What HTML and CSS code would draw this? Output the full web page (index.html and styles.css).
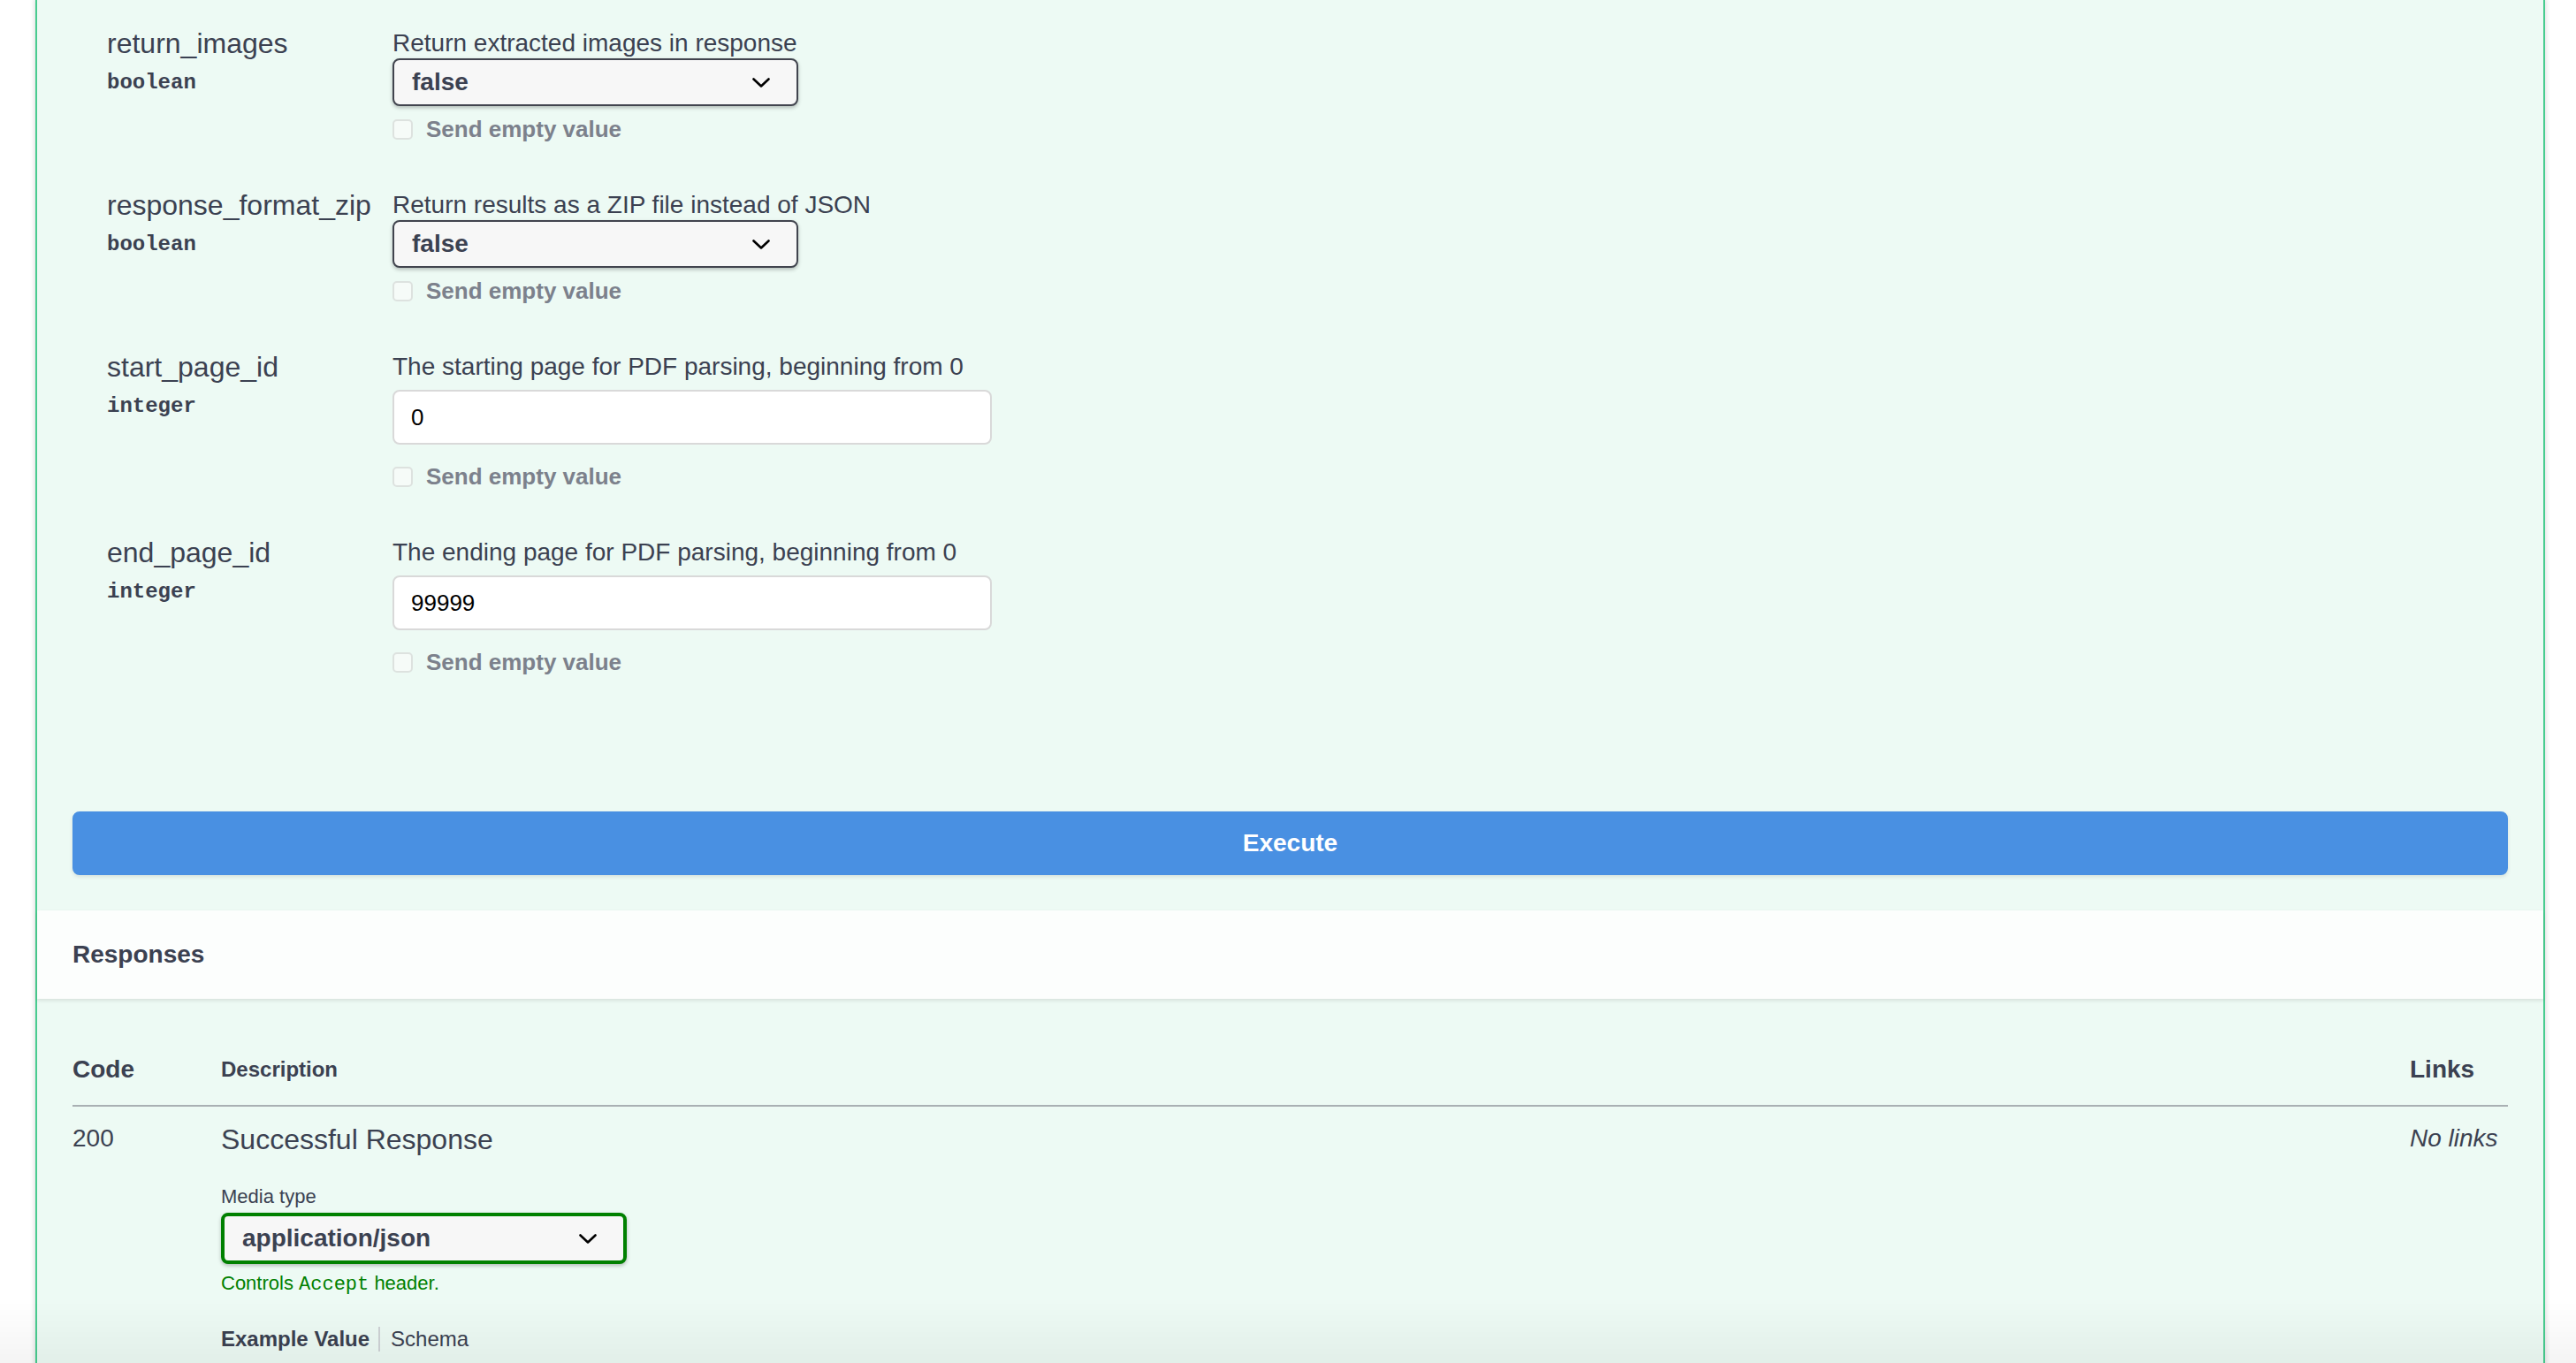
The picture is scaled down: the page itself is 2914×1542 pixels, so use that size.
FILE: index.html
```html
<!DOCTYPE html>
<html lang="en">
<head>
    <meta charset="UTF-8">
    <meta name="viewport" content="width=device-width, initial-scale=1.0">
    <title>Swagger UI</title>
    <link rel="stylesheet" href="styles.css">
</head>
<body>
    <div class="wrapper">
        <div class="opblock">
            <div class="parameters">
                <div class="param-row">
                    <div class="param-name">
                        <div class="name">return_images</div>
                        <div class="type">boolean</div>
                    </div>
                    <div class="param-desc">
                        <p>Return extracted images in response</p>
                        <div class="select">
                            <span>false</span>
                            <svg class="chevron" width="20" height="11" viewBox="0 0 20 11"><polyline points="1.5,1.5 10,9.5 18.5,1.5" /></svg>
                        </div>
                        <label class="empty-value"><input type="checkbox" disabled>Send empty value</label>
                    </div>
                </div>
                <div class="param-row">
                    <div class="param-name">
                        <div class="name">response_format_zip</div>
                        <div class="type">boolean</div>
                    </div>
                    <div class="param-desc">
                        <p>Return results as a ZIP file instead of JSON</p>
                        <div class="select">
                            <span>false</span>
                            <svg class="chevron" width="20" height="11" viewBox="0 0 20 11"><polyline points="1.5,1.5 10,9.5 18.5,1.5" /></svg>
                        </div>
                        <label class="empty-value"><input type="checkbox" disabled>Send empty value</label>
                    </div>
                </div>
                <div class="param-row">
                    <div class="param-name">
                        <div class="name">start_page_id</div>
                        <div class="type">integer</div>
                    </div>
                    <div class="param-desc">
                        <p>The starting page for PDF parsing, beginning from 0</p>
                        <input class="text-input" type="text" value="0">
                        <label class="empty-value"><input type="checkbox" disabled>Send empty value</label>
                    </div>
                </div>
                <div class="param-row">
                    <div class="param-name">
                        <div class="name">end_page_id</div>
                        <div class="type">integer</div>
                    </div>
                    <div class="param-desc">
                        <p>The ending page for PDF parsing, beginning from 0</p>
                        <input class="text-input" type="text" value="99999">
                        <label class="empty-value"><input type="checkbox" disabled>Send empty value</label>
                    </div>
                </div>
            </div>

            <div class="execute-wrapper">
                <button class="btn-execute">Execute</button>
            </div>

            <div class="section-header">
                <h4>Responses</h4>
            </div>

            <div class="responses-inner">
                <table class="responses-table">
                    <thead>
                        <tr>
                            <th class="col-code">Code</th>
                            <th class="col-desc">Description</th>
                            <th class="col-links">Links</th>
                        </tr>
                    </thead>
                    <tbody>
                        <tr>
                            <td class="col-code">200</td>
                            <td class="col-desc">
                                <div class="response-text">Successful Response</div>
                                <div class="media-type">
                                    <div class="media-title">Media type</div>
                                    <div class="select select-media">
                                        <span>application/json</span>
                                        <svg class="chevron" width="20" height="11" viewBox="0 0 20 11"><polyline points="1.5,1.5 10,9.5 18.5,1.5" /></svg>
                                    </div>
                                    <div class="accept-msg">Controls <code>Accept</code> header.</div>
                                </div>
                                <ul class="tabs">
                                    <li class="tab active">Example Value</li>
                                    <li class="tab">Schema</li>
                                </ul>
                            </td>
                            <td class="col-links"><i>No links</i></td>
                        </tr>
                    </tbody>
                </table>
            </div>
        </div>
    </div>
    <div class="page-fade"></div>
</body>
</html>
```

FILE: styles.css
```css
html, body {
    height: 100%;
    overflow: hidden;
}
body {
    margin: 0;
    background-color: #fff;
    font-family: "Liberation Sans", Arial, sans-serif;
    color: #3b4151;
}
.wrapper {
    padding: 0 35px 0 40px;
}
.opblock {
    margin-top: -2px;
    border: 2px solid #49cc90;
    background-color: #edfaf4;
    box-shadow: 0 0 6px rgba(0, 0, 0, 0.19);
}

/* parameters */
.parameters {
    display: flex;
    flex-direction: column;
    gap: 54px;
    padding: 32px 40px 114px 79px;
}
.param-row {
    display: flex;
}
.param-name {
    width: 323px;
    flex-shrink: 0;
}
.name {
    font-size: 32px;
    line-height: 34px;
}
.type {
    margin-top: 13px;
    font-family: "Liberation Mono", "Courier New", monospace;
    font-weight: 700;
    font-size: 24px;
    line-height: 30px;
}
.param-desc {
    display: flex;
    flex-direction: column;
    align-items: flex-start;
}
.param-desc p {
    margin: 0;
    font-size: 28px;
    line-height: 34px;
}
.select {
    box-sizing: border-box;
    display: flex;
    align-items: center;
    justify-content: space-between;
    width: 459px;
    height: 54px;
    padding: 0 30px 0 20px;
    border: 2px solid #41444e;
    border-radius: 8px;
    background-color: #f7f7f7;
    box-shadow: 0 2px 4px rgba(0, 0, 0, 0.25);
    font-size: 28px;
    font-weight: 700;
}
.chevron polyline {
    fill: none;
    stroke: #000;
    stroke-width: 2.6;
    stroke-linecap: round;
    stroke-linejoin: round;
}
.text-input {
    display: block;
    box-sizing: border-box;
    width: 678px;
    height: 62px;
    margin: 9px 0 10px;
    padding: 0 19px;
    border: 2px solid #d9d9d9;
    border-radius: 8px;
    background-color: #fff;
    font-family: "Liberation Sans", Arial, sans-serif;
    font-size: 26px;
    color: #000;
}
.empty-value {
    display: flex;
    align-items: center;
    margin-top: 11px;
    height: 30px;
    font-size: 26px;
    font-weight: 700;
    color: #7c818c;
}
.empty-value input {
    appearance: none;
    width: 23px;
    height: 23px;
    margin: 0 15px 0 0;
    border: 2px solid #dde2df;
    border-radius: 5px;
    background-color: #f6fbf8;
}

/* execute */
.execute-wrapper {
    padding: 40px;
}
.btn-execute {
    display: block;
    width: 100%;
    height: 72px;
    border: 2px solid #4990e2;
    border-radius: 8px;
    background-color: #4990e2;
    color: #fff;
    font-family: "Liberation Sans", Arial, sans-serif;
    font-size: 28px;
    font-weight: 700;
    box-shadow: 0 2px 4px rgba(0, 0, 0, 0.1);
    cursor: pointer;
}

/* responses */
.section-header {
    display: flex;
    align-items: center;
    height: 100px;
    padding: 0 40px;
    background-color: rgba(255, 255, 255, 0.8);
    box-shadow: 0 2px 4px rgba(0, 0, 0, 0.1);
}
.section-header h4 {
    margin: 0;
    font-size: 28px;
    line-height: 32px;
}
.responses-inner {
    padding: 40px;
}
.responses-table {
    width: 100%;
    table-layout: fixed;
    border-collapse: separate;
    border-spacing: 0;
}
.responses-table th {
    padding: 24px 0;
    border-bottom: 2px solid #a9b0b3;
    text-align: left;
    vertical-align: middle;
    font-size: 28px;
    line-height: 32px;
}
.responses-table th.col-desc {
    font-size: 24px;
    line-height: 28px;
}
.col-code {
    width: 168px;
}
.col-links {
    width: 111px;
}
.responses-table td {
    padding: 20px 0 0;
    vertical-align: top;
    font-size: 28px;
    line-height: 32px;
}
.response-text {
    font-size: 32px;
    line-height: 34px;
}
.media-type {
    margin-top: 35px;
}
.media-title {
    margin-bottom: 5px;
    font-size: 22px;
    line-height: 26px;
}
.select-media {
    height: 58px;
    border: 4px solid #008000;
}
.accept-msg {
    margin-top: 9px;
    font-size: 22px;
    line-height: 26px;
    color: #008000;
}
.accept-msg code {
    font-family: "Liberation Mono", "Courier New", monospace;
    font-size: 22px;
}
.tabs {
    display: flex;
    margin: 34px 0 0;
    padding: 0;
    list-style: none;
}
.tab {
    font-size: 24px;
    line-height: 28px;
}
.tab.active {
    position: relative;
    padding-right: 24px;
    font-weight: 700;
}
.tab.active::after {
    content: "";
    position: absolute;
    top: 0;
    right: 12px;
    width: 2px;
    height: 100%;
    background-color: #cfd3d6;
}

.page-fade {
    position: fixed;
    left: 0;
    right: 0;
    bottom: 0;
    height: 70px;
    background: linear-gradient(rgba(0, 0, 0, 0), rgba(0, 0, 0, 0.045));
    pointer-events: none;
}
```
